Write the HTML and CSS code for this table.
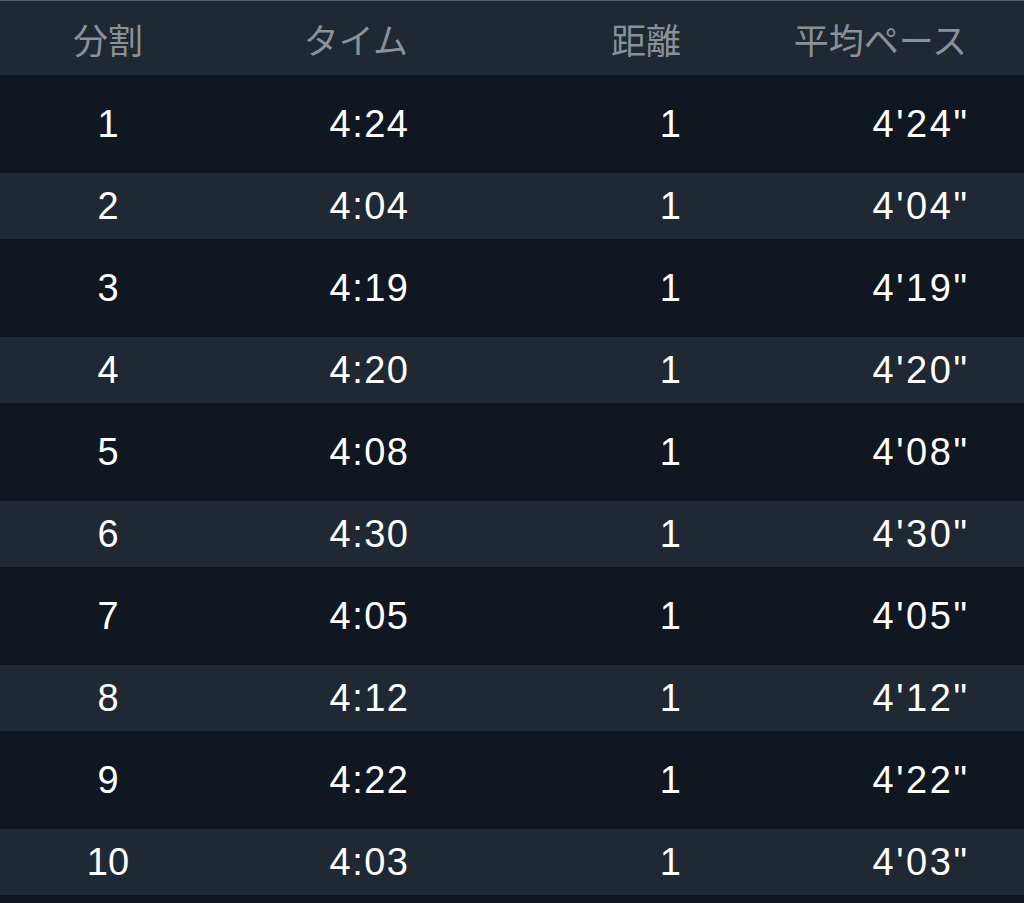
FILE: index.html
```html
<!DOCTYPE html>
<html lang="ja">
<head>
<meta charset="utf-8">
<title>分割</title>
<link rel="stylesheet" href="styles.css">
</head>
<body>
<div class="table">
  <div class="row head">
    <div class="c1">分割</div><div class="c2">タイム</div><div class="c3">距離</div><div class="c4">平均ペース</div>
  </div>
  <div class="row odd"><div class="c1">1</div><div class="c2">4:24</div><div class="c3">1</div><div class="c4">4'24"</div></div>
  <div class="row even"><div class="c1">2</div><div class="c2">4:04</div><div class="c3">1</div><div class="c4">4'04"</div></div>
  <div class="row odd"><div class="c1">3</div><div class="c2">4:19</div><div class="c3">1</div><div class="c4">4'19"</div></div>
  <div class="row even"><div class="c1">4</div><div class="c2">4:20</div><div class="c3">1</div><div class="c4">4'20"</div></div>
  <div class="row odd"><div class="c1">5</div><div class="c2">4:08</div><div class="c3">1</div><div class="c4">4'08"</div></div>
  <div class="row even"><div class="c1">6</div><div class="c2">4:30</div><div class="c3">1</div><div class="c4">4'30"</div></div>
  <div class="row odd"><div class="c1">7</div><div class="c2">4:05</div><div class="c3">1</div><div class="c4">4'05"</div></div>
  <div class="row even"><div class="c1">8</div><div class="c2">4:12</div><div class="c3">1</div><div class="c4">4'12"</div></div>
  <div class="row odd"><div class="c1">9</div><div class="c2">4:22</div><div class="c3">1</div><div class="c4">4'22"</div></div>
  <div class="row even"><div class="c1">10</div><div class="c2">4:03</div><div class="c3">1</div><div class="c4">4'03"</div></div>
</div>
</body>
</html>
```

FILE: styles.css
```css
html, body {
  margin: 0;
  padding: 0;
  background: #111720;
}
body {
  width: 1024px;
  height: 903px;
  overflow: hidden;
  font-family: "Liberation Sans", "Noto Sans CJK JP", sans-serif;
  color: #ffffff;
}
.table {
  display: flex;
  flex-direction: column;
}
.row {
  display: grid;
  grid-template-columns: 216px 192px 273px 286px;
  align-items: center;
  font-size: 38px;
}
.head {
  height: 74px;
  background: #1f2833;
  border-top: 1px solid #5a6068;
  color: #8b9199;
  font-size: 35px;
  font-family: "Noto Sans CJK JP", sans-serif;
}
.odd {
  height: 98px;
  background: #111720;
}
.even {
  height: 66px;
  background: #1f2833;
}
.c1 { text-align: center; }
.c2, .c3, .c4 { text-align: right; }
.row:not(.head) .c2 {
  letter-spacing: 1.5px;
  margin-right: -1.5px;
}
.row:not(.head) .c4 {
  letter-spacing: 2.6px;
  margin-right: -2.6px;
}
```
